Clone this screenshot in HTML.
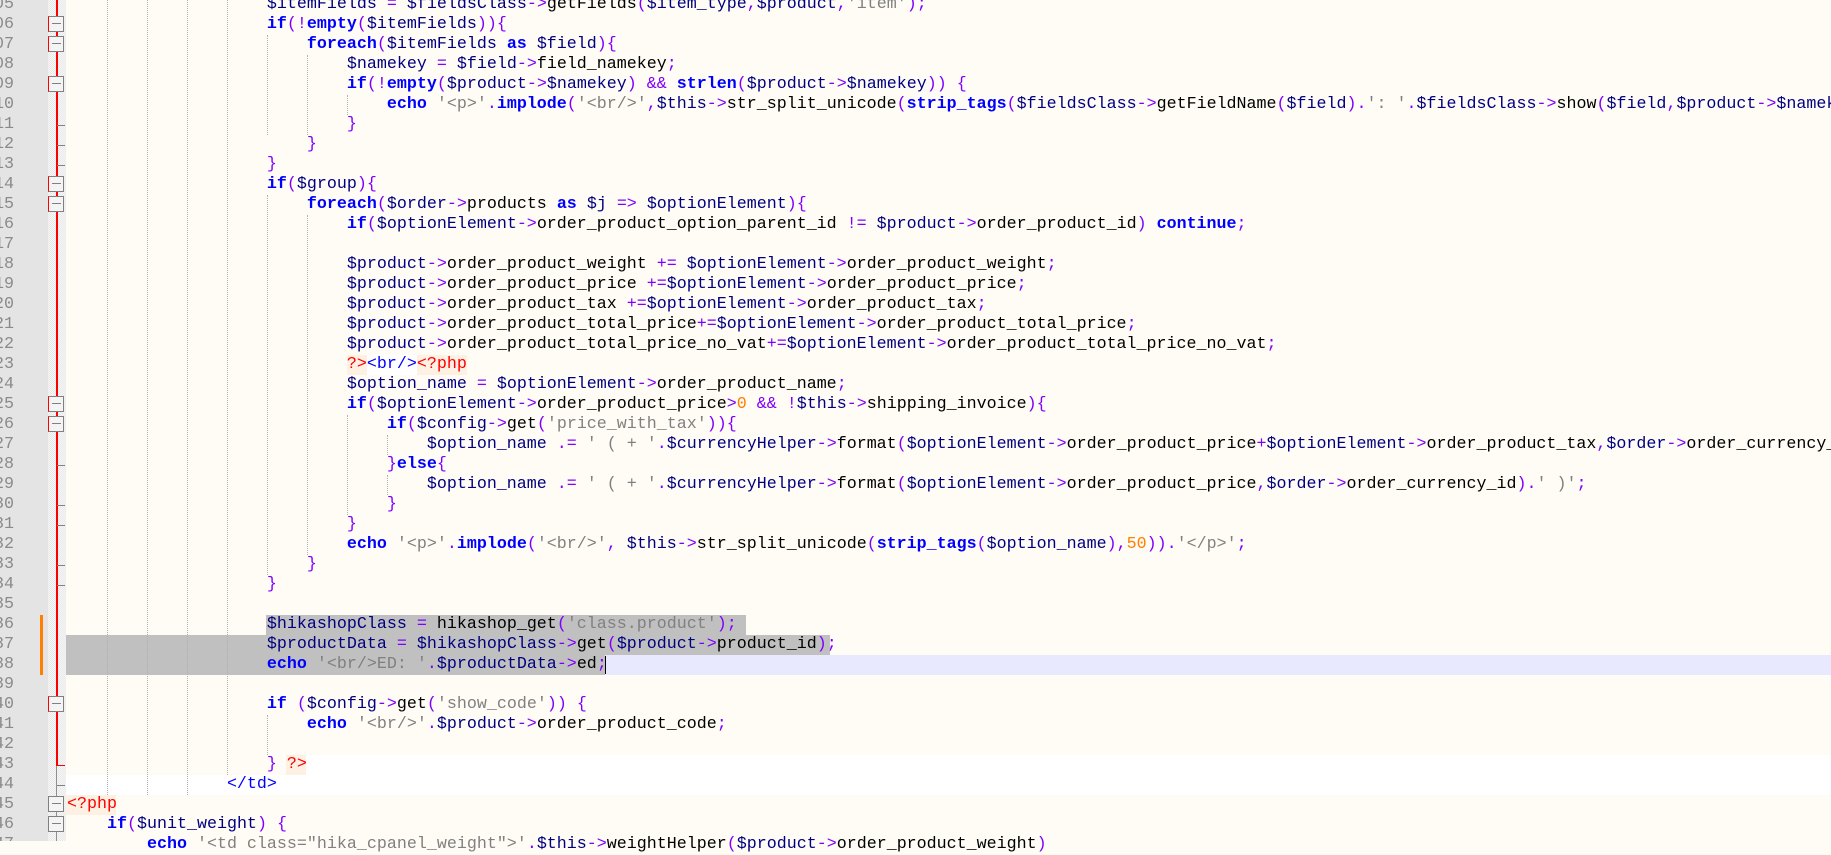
<!DOCTYPE html>
<html><head><meta charset="utf-8"><style>
body{margin:0;width:1831px;height:841px;overflow:hidden;background:#fffcf5;position:relative;font-family:"Liberation Mono",monospace;font-size:16.67px}
.gut{position:absolute;left:0;top:0;width:48px;height:841px;background:#e4e4e4;overflow:hidden}
.fm{position:absolute;left:48px;top:0;width:18px;height:841px;background:repeating-conic-gradient(#f6f6f6 0 25%,#e9e9e9 0 50%) 0 0/2px 2px}
.red{position:absolute;left:56px;width:2px;background:#f00}
.num{position:absolute;right:34px;color:#8a8a8a;height:20px;line-height:20px;white-space:pre}
.box{position:absolute;left:48px;width:14px;height:14px;border:1px solid #808080;border-left-color:#f00;background:#f4f4f4}
.box:after{content:"";position:absolute;left:3px;right:2px;top:6px;height:1px;background:#808080}
.tick{position:absolute;left:57px;width:8px;height:1px;background:#808080}
.ln{position:absolute;left:67px;height:20px;line-height:20px;white-space:pre;color:#000}
.k{color:#0000ff;font-weight:bold}.v{color:#000080}.o{color:#8000ff}.s{color:#808080}.n{color:#ff8000}.r{color:#ff0000}
.g{position:absolute;width:0;border-left:1px dotted #b0b0b0}
.bg{position:absolute;height:20px}
.om{position:absolute;left:40px;width:3px;height:20px;background:#ff8000}
</style></head><body>
<div class="fm"></div>
<div class="red" style="top:0;height:766px"></div>
<div class="red" style="top:766px;height:75px;background:#909090;width:1px"></div>

<!-- backgrounds -->
<div class="bg" style="left:266px;top:615px;width:480px;background:#c0c0c0"></div>
<div class="bg" style="left:66px;top:635px;width:764px;background:#c0c0c0"></div>
<div class="bg" style="left:66px;top:655px;width:539px;background:#c0c0c0"></div>
<div class="bg" style="left:605px;top:655px;width:1226px;background:#e8e8ff"></div>
<div class="bg" style="left:605px;top:656px;width:1px;height:18px;background:#000"></div>
<div class="bg" style="left:306px;top:755px;width:1525px;background:#fff"></div>
<div class="bg" style="left:66px;top:775px;width:1765px;background:#fff"></div>
<div class="bg" style="left:66px;top:795px;width:50px;background:#fdf1e4"></div>
<div class="bg" style="left:286px;top:755px;width:20px;background:#fdf1e4"></div>
<div class="bg" style="left:347px;top:355px;width:20px;background:#fdf1e4"></div>
<div class="bg" style="left:367px;top:355px;width:50px;background:#fff"></div>
<div class="bg" style="left:417px;top:355px;width:50px;background:#fdf1e4"></div>
<div class="om" style="top:615px"></div><div class="om" style="top:635px"></div><div class="om" style="top:655px"></div>

<!-- guides -->
<div class="g" style="left:107px;top:0;height:795px"></div>
<div class="g" style="left:147px;top:0;height:795px"></div>
<div class="g" style="left:187px;top:0;height:795px"></div>
<div class="g" style="left:227px;top:0;height:775px"></div>
<div class="g" style="left:267px;top:35px;height:100px"></div>
<div class="g" style="left:307px;top:55px;height:80px"></div>
<div class="g" style="left:347px;top:95px;height:20px"></div>
<div class="g" style="left:267px;top:195px;height:380px"></div>
<div class="g" style="left:307px;top:215px;height:340px"></div>
<div class="g" style="left:347px;top:415px;height:100px"></div>
<div class="g" style="left:387px;top:435px;height:20px"></div>
<div class="g" style="left:387px;top:475px;height:20px"></div>
<div class="g" style="left:267px;top:715px;height:40px"></div>

<div class="gut">
<div class="num" style="top:-5px">405</div><div class="num" style="top:15px">406</div><div class="num" style="top:35px">407</div><div class="num" style="top:55px">408</div><div class="num" style="top:75px">409</div><div class="num" style="top:95px">410</div><div class="num" style="top:115px">411</div><div class="num" style="top:135px">412</div><div class="num" style="top:155px">413</div><div class="num" style="top:175px">414</div><div class="num" style="top:195px">415</div><div class="num" style="top:215px">416</div><div class="num" style="top:235px">417</div><div class="num" style="top:255px">418</div><div class="num" style="top:275px">419</div><div class="num" style="top:295px">420</div><div class="num" style="top:315px">421</div><div class="num" style="top:335px">422</div><div class="num" style="top:355px">423</div><div class="num" style="top:375px">424</div><div class="num" style="top:395px">425</div><div class="num" style="top:415px">426</div><div class="num" style="top:435px">427</div><div class="num" style="top:455px">428</div><div class="num" style="top:475px">429</div><div class="num" style="top:495px">430</div><div class="num" style="top:515px">431</div><div class="num" style="top:535px">432</div><div class="num" style="top:555px">433</div><div class="num" style="top:575px">434</div><div class="num" style="top:595px">435</div><div class="num" style="top:615px">436</div><div class="num" style="top:635px">437</div><div class="num" style="top:655px">438</div><div class="num" style="top:675px">439</div><div class="num" style="top:695px">440</div><div class="num" style="top:715px">441</div><div class="num" style="top:735px">442</div><div class="num" style="top:755px">443</div><div class="num" style="top:775px">444</div><div class="num" style="top:795px">445</div><div class="num" style="top:815px">446</div><div class="num" style="top:835px">447</div>
</div>
<div class="om" style="top:615px"></div><div class="om" style="top:635px"></div><div class="om" style="top:655px"></div>

<!-- fold markers -->
<div class="box" style="top:16px"></div><div class="box" style="top:36px"></div><div class="box" style="top:76px"></div>
<div class="box" style="top:176px"></div><div class="box" style="top:196px"></div>
<div class="box" style="top:396px"></div><div class="box" style="top:416px"></div>
<div class="box" style="top:696px"></div>
<div class="box" style="top:796px;border-left-color:#808080"></div><div class="box" style="top:816px;border-left-color:#808080"></div>
<div class="tick" style="top:125px"></div><div class="tick" style="top:145px"></div><div class="tick" style="top:165px"></div>
<div class="tick" style="top:465px"></div><div class="tick" style="top:505px"></div><div class="tick" style="top:525px"></div><div class="tick" style="top:565px"></div><div class="tick" style="top:585px"></div>
<div class="tick" style="top:765px;background:#f00"></div><div class="tick" style="top:785px"></div>

<!-- code -->
<div class="ln" style="top:-5px">                    <span class="v">$itemFields</span> <span class="o">=</span> <span class="v">$fieldsClass</span><span class="o">-&gt;</span>getFields<span class="o">(</span><span class="v">$item_type</span><span class="o">,</span><span class="v">$product</span><span class="o">,</span><span class="s">'item'</span><span class="o">);</span></div>
<div class="ln" style="top:15px">                    <span class="k">if</span><span class="o">(!</span><span class="k">empty</span><span class="o">(</span><span class="v">$itemFields</span><span class="o">)){</span></div>
<div class="ln" style="top:35px">                        <span class="k">foreach</span><span class="o">(</span><span class="v">$itemFields</span> <span class="k">as</span> <span class="v">$field</span><span class="o">){</span></div>
<div class="ln" style="top:55px">                            <span class="v">$namekey</span> <span class="o">=</span> <span class="v">$field</span><span class="o">-&gt;</span>field_namekey<span class="o">;</span></div>
<div class="ln" style="top:75px">                            <span class="k">if</span><span class="o">(!</span><span class="k">empty</span><span class="o">(</span><span class="v">$product</span><span class="o">-&gt;</span><span class="v">$namekey</span><span class="o">)</span> <span class="o">&amp;&amp;</span> <span class="k">strlen</span><span class="o">(</span><span class="v">$product</span><span class="o">-&gt;</span><span class="v">$namekey</span><span class="o">))</span> <span class="o">{</span></div>
<div class="ln" style="top:95px">                                <span class="k">echo</span> <span class="s">'&lt;p&gt;'</span><span class="o">.</span><span class="k">implode</span><span class="o">(</span><span class="s">'&lt;br/&gt;'</span><span class="o">,</span><span class="v">$this</span><span class="o">-&gt;</span>str_split_unicode<span class="o">(</span><span class="k">strip_tags</span><span class="o">(</span><span class="v">$fieldsClass</span><span class="o">-&gt;</span>getFieldName<span class="o">(</span><span class="v">$field</span><span class="o">).</span><span class="s">': '</span><span class="o">.</span><span class="v">$fieldsClass</span><span class="o">-&gt;</span>show<span class="o">(</span><span class="v">$field</span><span class="o">,</span><span class="v">$product</span><span class="o">-&gt;</span><span class="v">$namekey</span></div>
<div class="ln" style="top:115px">                            <span class="o">}</span></div>
<div class="ln" style="top:135px">                        <span class="o">}</span></div>
<div class="ln" style="top:155px">                    <span class="o">}</span></div>
<div class="ln" style="top:175px">                    <span class="k">if</span><span class="o">(</span><span class="v">$group</span><span class="o">){</span></div>
<div class="ln" style="top:195px">                        <span class="k">foreach</span><span class="o">(</span><span class="v">$order</span><span class="o">-&gt;</span>products <span class="k">as</span> <span class="v">$j</span> <span class="o">=&gt;</span> <span class="v">$optionElement</span><span class="o">){</span></div>
<div class="ln" style="top:215px">                            <span class="k">if</span><span class="o">(</span><span class="v">$optionElement</span><span class="o">-&gt;</span>order_product_option_parent_id <span class="o">!=</span> <span class="v">$product</span><span class="o">-&gt;</span>order_product_id<span class="o">)</span> <span class="k">continue</span><span class="o">;</span></div>
<div class="ln" style="top:255px">                            <span class="v">$product</span><span class="o">-&gt;</span>order_product_weight <span class="o">+=</span> <span class="v">$optionElement</span><span class="o">-&gt;</span>order_product_weight<span class="o">;</span></div>
<div class="ln" style="top:275px">                            <span class="v">$product</span><span class="o">-&gt;</span>order_product_price <span class="o">+=</span><span class="v">$optionElement</span><span class="o">-&gt;</span>order_product_price<span class="o">;</span></div>
<div class="ln" style="top:295px">                            <span class="v">$product</span><span class="o">-&gt;</span>order_product_tax <span class="o">+=</span><span class="v">$optionElement</span><span class="o">-&gt;</span>order_product_tax<span class="o">;</span></div>
<div class="ln" style="top:315px">                            <span class="v">$product</span><span class="o">-&gt;</span>order_product_total_price<span class="o">+=</span><span class="v">$optionElement</span><span class="o">-&gt;</span>order_product_total_price<span class="o">;</span></div>
<div class="ln" style="top:335px">                            <span class="v">$product</span><span class="o">-&gt;</span>order_product_total_price_no_vat<span class="o">+=</span><span class="v">$optionElement</span><span class="o">-&gt;</span>order_product_total_price_no_vat<span class="o">;</span></div>
<div class="ln" style="top:355px">                            <span class="r">?&gt;</span><span style="color:#0000ff">&lt;br/&gt;</span><span class="r">&lt;?php</span></div>
<div class="ln" style="top:375px">                            <span class="v">$option_name</span> <span class="o">=</span> <span class="v">$optionElement</span><span class="o">-&gt;</span>order_product_name<span class="o">;</span></div>
<div class="ln" style="top:395px">                            <span class="k">if</span><span class="o">(</span><span class="v">$optionElement</span><span class="o">-&gt;</span>order_product_price<span class="o">&gt;</span><span class="n">0</span> <span class="o">&amp;&amp;</span> <span class="o">!</span><span class="v">$this</span><span class="o">-&gt;</span>shipping_invoice<span class="o">){</span></div>
<div class="ln" style="top:415px">                                <span class="k">if</span><span class="o">(</span><span class="v">$config</span><span class="o">-&gt;</span>get<span class="o">(</span><span class="s">'price_with_tax'</span><span class="o">)){</span></div>
<div class="ln" style="top:435px">                                    <span class="v">$option_name</span> <span class="o">.=</span> <span class="s">' ( + '</span><span class="o">.</span><span class="v">$currencyHelper</span><span class="o">-&gt;</span>format<span class="o">(</span><span class="v">$optionElement</span><span class="o">-&gt;</span>order_product_price<span class="o">+</span><span class="v">$optionElement</span><span class="o">-&gt;</span>order_product_tax<span class="o">,</span><span class="v">$order</span><span class="o">-&gt;</span>order_currency_id</div>
<div class="ln" style="top:455px">                                <span class="o">}</span><span class="k">else</span><span class="o">{</span></div>
<div class="ln" style="top:475px">                                    <span class="v">$option_name</span> <span class="o">.=</span> <span class="s">' ( + '</span><span class="o">.</span><span class="v">$currencyHelper</span><span class="o">-&gt;</span>format<span class="o">(</span><span class="v">$optionElement</span><span class="o">-&gt;</span>order_product_price<span class="o">,</span><span class="v">$order</span><span class="o">-&gt;</span>order_currency_id<span class="o">).</span><span class="s">' )'</span><span class="o">;</span></div>
<div class="ln" style="top:495px">                                <span class="o">}</span></div>
<div class="ln" style="top:515px">                            <span class="o">}</span></div>
<div class="ln" style="top:535px">                            <span class="k">echo</span> <span class="s">'&lt;p&gt;'</span><span class="o">.</span><span class="k">implode</span><span class="o">(</span><span class="s">'&lt;br/&gt;'</span><span class="o">,</span> <span class="v">$this</span><span class="o">-&gt;</span>str_split_unicode<span class="o">(</span><span class="k">strip_tags</span><span class="o">(</span><span class="v">$option_name</span><span class="o">),</span><span class="n">50</span><span class="o">)).</span><span class="s">'&lt;/p&gt;'</span><span class="o">;</span></div>
<div class="ln" style="top:555px">                        <span class="o">}</span></div>
<div class="ln" style="top:575px">                    <span class="o">}</span></div>
<div class="ln" style="top:615px">                    <span class="v">$hikashopClass</span> <span class="o">=</span> hikashop_get<span class="o">(</span><span class="s">'class.product'</span><span class="o">);</span></div>
<div class="ln" style="top:635px">                    <span class="v">$productData</span> <span class="o">=</span> <span class="v">$hikashopClass</span><span class="o">-&gt;</span>get<span class="o">(</span><span class="v">$product</span><span class="o">-&gt;</span>product_id<span class="o">);</span></div>
<div class="ln" style="top:655px">                    <span class="k">echo</span> <span class="s">'&lt;br/&gt;ED: '</span><span class="o">.</span><span class="v">$productData</span><span class="o">-&gt;</span>ed<span class="o">;</span></div>
<div class="ln" style="top:695px">                    <span class="k">if</span> <span class="o">(</span><span class="v">$config</span><span class="o">-&gt;</span>get<span class="o">(</span><span class="s">'show_code'</span><span class="o">))</span> <span class="o">{</span></div>
<div class="ln" style="top:715px">                        <span class="k">echo</span> <span class="s">'&lt;br/&gt;'</span><span class="o">.</span><span class="v">$product</span><span class="o">-&gt;</span>order_product_code<span class="o">;</span></div>
<div class="ln" style="top:755px">                    <span class="o">}</span> <span class="r">?&gt;</span></div>
<div class="ln" style="top:775px">                <span style="color:#0000ff">&lt;/td&gt;</span></div>
<div class="ln" style="top:795px"><span class="r">&lt;?php</span></div>
<div class="ln" style="top:815px">    <span class="k">if</span><span class="o">(</span><span class="v">$unit_weight</span><span class="o">)</span> <span class="o">{</span></div>
<div class="ln" style="top:835px">        <span class="k">echo</span> <span class="s">'&lt;td class="hika_cpanel_weight"&gt;'</span><span class="o">.</span><span class="v">$this</span><span class="o">-&gt;</span>weightHelper<span class="o">(</span><span class="v">$product</span><span class="o">-&gt;</span>order_product_weight<span class="o">)</span></div>
</body></html>
